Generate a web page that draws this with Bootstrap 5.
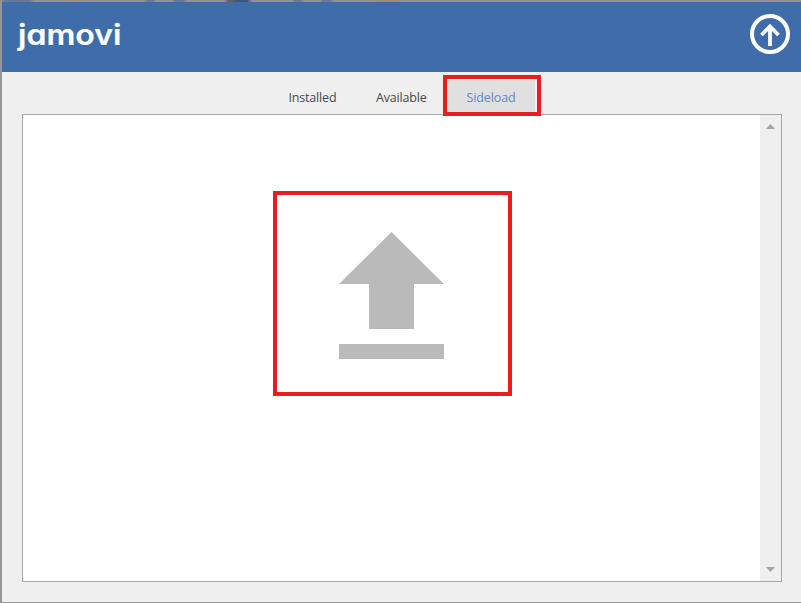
<!DOCTYPE html>
<html lang="en">
<head>
<meta charset="utf-8">
<meta name="viewport" content="width=device-width, initial-scale=1">
<title>jamovi modules</title>
<link href="https://cdn.jsdelivr.net/npm/bootstrap@5.3.0/dist/css/bootstrap.min.css" rel="stylesheet">
<style>
body { font-family: "Open Sans", "Noto Sans", sans-serif; background: #efefef; }
.dialog-frame { border-left: 2px solid #969696; border-bottom: 1px solid #999; }
.backdrop-edge { height: 2px; margin-left: -2px; background: linear-gradient(90deg, #909498 0 2px, #66799a 4px 30px, #929292 34px 70px, #a39269 74px 82px, #929292 88px 144px, #66799a 148px 153px, #929292 156px 172px, #66799a 175px 183px, #929292 187px 224px, #665e58 229px 233px, #385786 237px 247px, #929292 252px 292px, #66799a 295px 300px, #929292 304px 320px, #66799a 323px 330px, #929292 334px 374px, #a58c65 378px 396px, #929292 400px); }
.title-bar { height: 70px; background: #3e6da9; padding: 0 11px 0 13px; }
.wordmark { display: block; margin-top: -2px; }
.wordmark text { font-family: "Inter", sans-serif; font-size: 29px; font-weight: 600; font-feature-settings: "cv11"; fill: #fff; stroke: #fff; stroke-width: .2; stroke-linejoin: round; }
.close-up { margin-top: -7px; }
.tab-strip { height: 42px; padding: 3px 0 0 267px; }
.tab-item { height: 40px; padding: 14px 0 0; font-size: 12.5px; letter-spacing: -.18px; line-height: 18px; color: #484848; }
.tab-one { width: 87px; padding-left: 19.5px; }
.tab-two { width: 87px; padding-left: 20px; }
.tab-active { width: 98px; height: 41px; padding: 10px 0 0 19.5px; letter-spacing: -.1px; border: 4px solid #e81e1e; color: #5c88c7; background: linear-gradient(#e0e0e0, #e0e0e0) 0 1px / 88px 33px no-repeat; position: relative; z-index: 1; }
.panel { margin: 0 19px 20px 20px; border: 1px solid #a8a8a8; background: #fff; }
.drop-zone { width: 239px; height: 205px; border: 4px solid #e81e1e; margin: 76px 0 0 250px; padding: 37px 0 0 62px; }
.scroll-track { width: 21px; background: #efefef; padding: 9px 0 9px; }
</style>
<script src="https://cdn.jsdelivr.net/npm/bootstrap@5.3.0/dist/js/bootstrap.bundle.min.js"></script>
</head>
<body class="overflow-hidden">
<div class="dialog-frame vh-100 d-flex flex-column">
  <div class="backdrop-edge flex-shrink-0"></div>
  <header class="title-bar d-flex align-items-center justify-content-between flex-shrink-0">
    <svg class="wordmark" width="110" height="38" role="img" aria-label="jamovi"><text x="3" y="28" textLength="103.5" lengthAdjust="spacingAndGlyphs">jamovi</text></svg>
    <svg class="close-up" width="40" height="40" viewBox="0 0 40 40" fill="none" stroke="#fff" stroke-width="4">
      <circle cx="20" cy="20" r="18"/>
      <path d="M20 32V13M11.5 21L20 12.5L28.5 21" stroke-width="3.8"/>
    </svg>
  </header>
  <nav class="tab-strip d-flex flex-shrink-0">
    <a class="tab-item tab-one d-flex align-items-start text-decoration-none">Installed</a>
    <a class="tab-item tab-two d-flex align-items-start text-decoration-none">Available</a>
    <a class="tab-item tab-active d-flex align-items-start flex-shrink-0 text-decoration-none">Sideload</a>
  </nav>
  <main class="panel d-flex flex-grow-1">
    <div class="flex-grow-1">
      <div class="drop-zone">
        <svg class="d-block" width="105" height="127" viewBox="0 0 105 127" fill="#bababa"><path d="M52.5 0L105 52H75V97H30V52H0zM0 112H105V127H0z"/></svg>
      </div>
    </div>
    <div class="scroll-track d-flex flex-column justify-content-between align-items-center">
      <svg width="9" height="5" fill="#a3a3a3"><path d="M4.5 0L9 5H0z"/></svg>
      <svg width="9" height="5" fill="#a3a3a3"><path d="M0 0H9L4.5 5z"/></svg>
    </div>
  </main>
</div>
</body>
</html>
